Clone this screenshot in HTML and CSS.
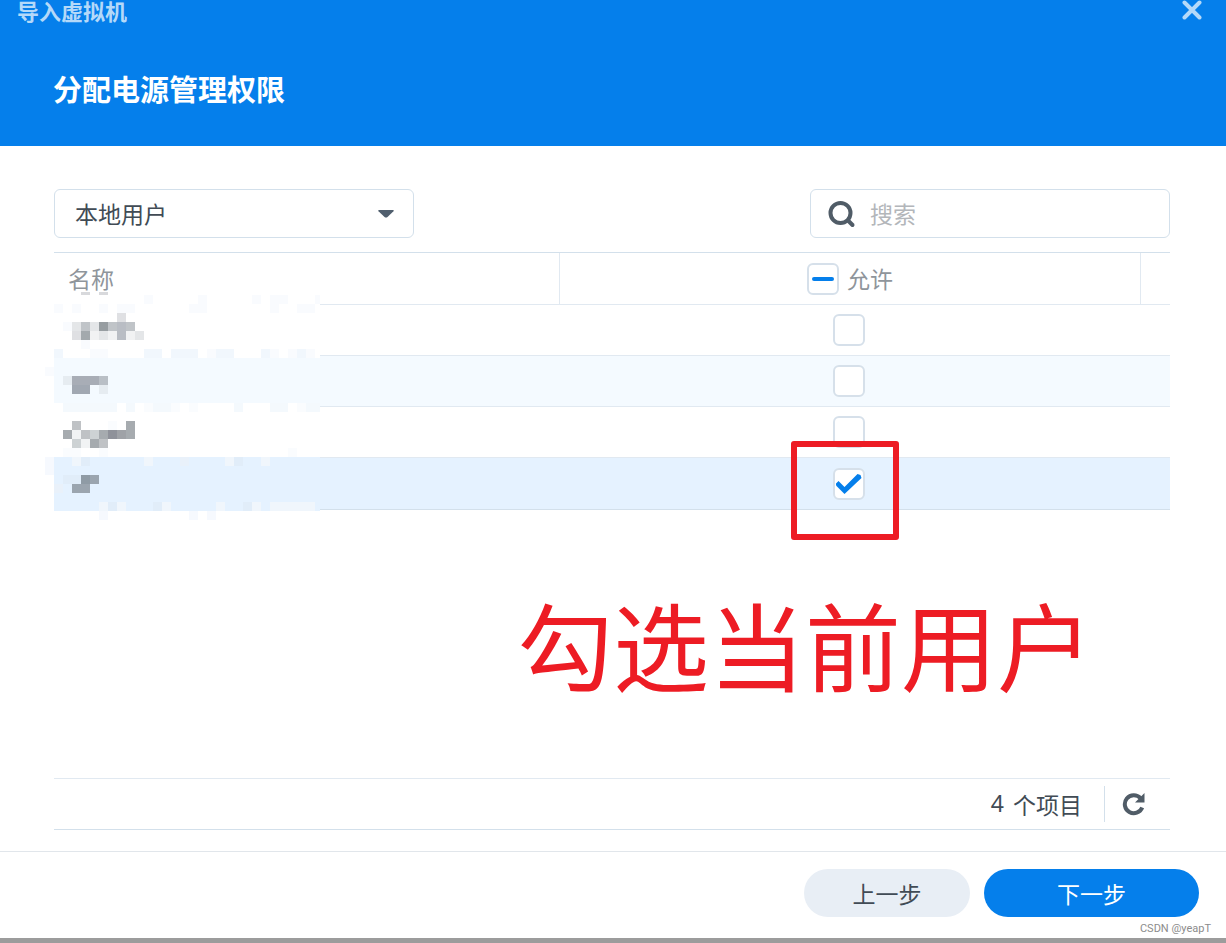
FILE: index.html
```html
<!DOCTYPE html>
<html lang="zh-CN">
<head>
  <meta charset="UTF-8">
  <meta name="viewport" content="width=device-width, initial-scale=1">
  <title>导入虚拟机</title>
  <link rel="stylesheet" href="styles.css">
</head>
<body>
  <div class="wizard">
    <header class="wizard-header">
      <div class="title-bar">
        <span class="window-title">导入虚拟机</span>
        <button class="close-btn" type="button" aria-label="关闭">
          <svg width="20" height="20" viewBox="0 0 20 20"><path d="M2.500 2.500L17.500 17.500M17.500 2.500L2.500 17.500" stroke="currentColor" stroke-width="4" stroke-linecap="round"/></svg>
        </button>
      </div>
      <h1>分配电源管理权限</h1>
    </header>

    <main class="content">
      <div class="toolbar">
        <div class="select-box">
          <select aria-label="用户类型">
            <option>本地用户</option>
            <option>本地群组</option>
          </select>
          <svg class="arrow" width="16" height="8" viewBox="0 0 16 8"><path d="M1 0H15Q16.500 0 15.500 1.200L9.500 7Q8 8 6.500 7L.5 1.200Q-.5 0 1 0Z" fill="#505f6e"/></svg>
        </div>
        <div class="search-box">
          <svg width="28" height="30" viewBox="0 0 28 30" fill="none" stroke="#505c67" stroke-width="4"><circle cx="12.500" cy="14" r="10"/><path d="M20 21.500L24.500 26" stroke-linecap="round"/></svg>
          <input type="search" placeholder="搜索" aria-label="搜索">
        </div>
      </div>

      <div class="list">
        <table>
          <thead>
            <tr>
              <th class="col-name">名称</th>
              <th class="col-allow">
                <label><input type="checkbox" class="check partial"> 允许</label>
              </th>
              <th class="col-end"></th>
            </tr>
          </thead>
          <tbody>
            <tr>
              <td></td>
              <td class="allow"><input type="checkbox" class="check" aria-label="允许"></td>
              <td></td>
            </tr>
            <tr class="even">
              <td></td>
              <td class="allow"><input type="checkbox" class="check" aria-label="允许"></td>
              <td></td>
            </tr>
            <tr>
              <td></td>
              <td class="allow"><input type="checkbox" class="check" aria-label="允许"></td>
              <td></td>
            </tr>
            <tr class="selected">
              <td></td>
              <td class="allow"><input type="checkbox" class="check" aria-label="允许" checked></td>
              <td></td>
            </tr>
          </tbody>
        </table>

        <!-- pixelated user names, 9px blocks -->
        <svg class="mosaic" width="275" height="228" viewBox="0 0 275 228" shape-rendering="crispEdges">
          <path d="M9 3H275V66H9ZM9 111H275V165H9Z" fill="#fff"/>
          <path d="M9 66H275V111H9Z" fill="#f4faff"/>
          <path d="M9 165H275V219H9Z" fill="#e5f2ff"/>
          <path d="M36 0h9v3h-9zM54 0h9v3h-9z" fill="#d8d9dc"/>
          <g transform="translate(0 3) scale(9)" stroke-width="1">
            <path stroke="#f9fbfe" d="M11 .5h1M17 .5h1M23 .5h1M25 .5h2M30 .5h1M1 1.500h1M3 1.500h1M6 1.500h1M8 1.500h2M16 1.500h2M25 1.500h1M28 1.500h2M2 3.500h1M4 5.500h1M5 6.500h2M18 6.500h1M25 6.500h1M27 6.500h1M29 6.500h1M0 8.500h1"/>
            <path stroke="#f1f7fd" d="M1 6.500h1M11 6.500h2M14 6.500h3M19 6.500h2M24 6.500h1M28 6.500h1"/>
            <!-- first name -->
            <path stroke="#dfe0e3" d="M8 2.500h1M3 4.500h1"/>
            <path stroke="#e4e6e8" d="M3 3.500h1M5 3.500h1M6 4.500h1M10 4.500h1"/>
            <path stroke="#c0c4c8" d="M4 3.500h1M7 3.500h1M9 3.500h1"/>
            <path stroke="#979da1" d="M6 3.500h1"/>
            <path stroke="#b9bdc4" d="M8 3.500h1M8 4.500h1"/>
            <path stroke="#a3a9ad" d="M4 4.500h1"/>
            <path stroke="#f1f2f3" d="M5 4.500h1M7 4.500h1M9 4.500h1"/>
            <!-- second name -->
            <path stroke="#e6ecf1" d="M2 9.500h1M6 10.500h1"/>
            <path stroke="#a8adb6" d="M3 9.500h3"/>
            <path stroke="#b9bfc6" d="M6 9.500h1"/>
            <path stroke="#a1a8b2" d="M3 10.500h2"/>
            <path stroke="#f4f9fd" d="M2 12.500h6M9 12.500h1M12 12.500h2M21 12.500h1M25 12.500h2M29 12.500h2"/>
            <path stroke="#fafcfe" d="M11 12.500h1M14 12.500h1M16 12.500h1M28 12.500h1M7 14.500h1M2 17.500h2M6 17.500h1M27 17.500h1"/>
            <!-- third name -->
            <path stroke="#bfc2c5" d="M3 14.500h1M4 15.500h1M6 16.500h1"/>
            <path stroke="#a6abaf" d="M9 14.500h1M2 15.500h1M6 15.500h1M9 15.500h1M5 16.500h1"/>
            <path stroke="#f1f3f4" d="M3 15.500h1M4 16.500h1"/>
            <path stroke="#cdd2d4" d="M5 15.500h1M3 16.500h1"/>
            <path stroke="#8f929a" d="M7 15.500h1"/>
            <path stroke="#9fa2a7" d="M8 15.500h1"/>
            <!-- fourth name -->
            <path stroke="#f6f9fe" d="M0 18.500h1M0 19.500h1M6 24.500h1M16 24.500h1M18 24.500h1"/>
            <path stroke="#f0f6fc" d="M3 18.500h1M11 18.500h1M20 18.500h1M24 18.500h1M6 23.500h1M8 23.500h1M13 23.500h1M19 23.500h1M23 23.500h1M25 23.500h5"/>
            <path stroke="#e1edf9" d="M4 18.500h1M21 18.500h1M2 20.500h2M7 23.500h1M12 23.500h1M22 23.500h1"/>
            <path stroke="#e9f1fa" d="M15 18.500h1M1 21.500h1"/>
            <path stroke="#8f9ba5" d="M4 20.500h1"/>
            <path stroke="#9ba5af" d="M5 20.500h1M3 21.500h2"/>
          </g>
        </svg>

        <div class="mark-box"></div>
        <p class="mark-text">勾选当前用户</p>
      </div>

      <div class="status-bar">
        <span class="count"><span>4</span> <span>个项目</span></span>
        <button class="refresh-btn" type="button" aria-label="刷新">
          <svg width="24" height="24" viewBox="0 0 24 24"><path d="M18.500 6.200A9 9 0 1 0 20.200 15.500" fill="none" stroke="#505c67" stroke-width="4"/><path d="M22.500 1V10.500H13Z" fill="#505c67"/></svg>
        </button>
      </div>
    </main>

    <footer class="wizard-footer">
      <button class="btn" type="button">上一步</button>
      <button class="btn btn-primary" type="button">下一步</button>
    </footer>
    <span class="watermark">CSDN @yeapT</span>
  </div>
</body>
</html>
```
FILE: styles.css
```css
* {
  box-sizing: border-box;
}
body {
  margin: 0;
  font-family: "Noto Sans", "Noto Sans CJK SC", sans-serif;
  font-size: 23px;
  color: #414b55;
  background-color: #fff;
}
button, input, select {
  font-family: inherit;
  font-size: inherit;
  color: inherit;
}
button {
  border: none;
  padding: 0;
  cursor: pointer;
}
svg {
  display: block;
}
.wizard {
  position: relative;
  display: flex;
  flex-direction: column;
  min-height: 100vh;
  border-bottom: 5px solid #9c9c9c;
}
/* Header */
.wizard-header {
  height: 146px;
  background-color: #057feb;
  color: #fff;
}
.title-bar {
  display: flex;
  justify-content: space-between;
  align-items: flex-start;
  height: 22px;
  padding: 0 24px 0 17px;
  color: #b4d9f9;
}
.window-title {
  font-size: 22px;
  line-height: 22px;
  font-weight: bold;
}
.close-btn {
  background: none;
}
h1 {
  margin: 48px 0 0 53px;
  font-size: 29px;
  line-height: 40px;
  font-weight: bold;
}
/* Content */
.content {
  flex: 1;
  display: flex;
  flex-direction: column;
  padding: 43px 56px 21px 54px;
}
.toolbar {
  display: flex;
  justify-content: space-between;
  margin-bottom: 14px;
}
.select-box,
.search-box {
  position: relative;
  width: 360px;
  height: 49px;
  border: 1px solid #d3e0eb;
  border-radius: 6px;
}
.select-box select {
  width: 100%;
  height: 100%;
  padding: 0 20px;
  border: none;
  background: none;
  appearance: none;
}
.arrow {
  position: absolute;
  right: 19px;
  top: 20px;
  pointer-events: none;
}
.search-box {
  display: flex;
  align-items: center;
  gap: 14px;
  padding: 0 17px;
}
.search-box input {
  flex: 1;
  min-width: 0;
  padding: 0;
  border: none;
  outline: none;
  background: none;
}
.search-box input::placeholder {
  color: #b3b6ba;
}
/* User list */
.list {
  position: relative;
  flex: 1;
  border-top: 1px solid #d3e0eb;
}
table {
  width: 100%;
  table-layout: fixed;
  border-collapse: separate;
  border-spacing: 0;
}
th, td {
  height: 51px;
  padding: 0;
  border-bottom: 1px solid #e1e9f1;
}
th {
  height: 52px;
  border-right: 1px solid #e1e9f1;
  font-weight: normal;
  line-height: 32px;
  color: #8f959b;
}
.col-name {
  width: 506px;
  padding-left: 14px;
  text-align: left;
}
.col-end {
  width: 29px;
  border-right: none;
}
.col-allow label {
  display: flex;
  align-items: center;
  justify-content: center;
  gap: 8px;
}
.allow {
  padding: 0 4px 2px 0;
  text-align: center;
}
.even td {
  background-color: #f4faff;
}
.selected td {
  height: 52px;
  background-color: #e5f2ff;
  border-bottom-color: #d3e0eb;
}
.check {
  appearance: none;
  display: inline-grid;
  place-content: center;
  width: 32px;
  height: 32px;
  margin: 0;
  border: 2px solid #d6e0ea;
  border-radius: 6px;
  background-color: #fff;
  vertical-align: middle;
}
.check.partial::before {
  content: "";
  width: 22px;
  height: 4px;
  border-radius: 2px;
  background-color: #057feb;
}
.check:checked::before {
  content: "";
  width: 26px;
  height: 20px;
  background-color: #057feb;
  clip-path: polygon(0 10px, 3px 7px, 9px 13px, 22px 0, 25px 1px, 26px 4px, 9px 20px, 1px 12px);
}
.mosaic {
  position: absolute;
  left: -9px;
  top: 39px;
}
/* Red hint */
.mark-box {
  position: absolute;
  left: 66%;
  top: 188px;
  width: 108px;
  height: 99px;
  border: 6px solid #ed1c24;
  border-radius: 3px;
}
.mark-text {
  position: absolute;
  left: 41.5%;
  top: 338px;
  margin: 0;
  font-size: 96px;
  line-height: 112px;
  white-space: nowrap;
  color: #ed1c24;
}
/* Status bar */
.status-bar {
  display: flex;
  align-items: center;
  justify-content: flex-end;
  height: 52px;
  border-top: 1px solid #e1e9f1;
  border-bottom: 1px solid #d3e0eb;
}
.count {
  display: flex;
  gap: 9px;
}
.refresh-btn {
  height: 36px;
  margin-left: 22px;
  padding: 0 24px 0 17px;
  border-left: 1px solid #d3e0eb;
  background: none;
}
/* Footer */
.wizard-footer {
  display: flex;
  justify-content: flex-end;
  gap: 14px;
  padding: 17px 27px 21px;
  border-top: 1px solid #e1e6eb;
}
.btn {
  width: 166px;
  height: 48px;
  border-radius: 24px;
  background-color: #e8eef5;
}
.btn-primary {
  width: 215px;
  background-color: #057feb;
  color: #fff;
}
.watermark {
  position: absolute;
  right: 15px;
  bottom: 1px;
  font-family: Roboto, sans-serif;
  font-size: 11px;
  line-height: 16px;
  color: #8c8c8c;
}
```
